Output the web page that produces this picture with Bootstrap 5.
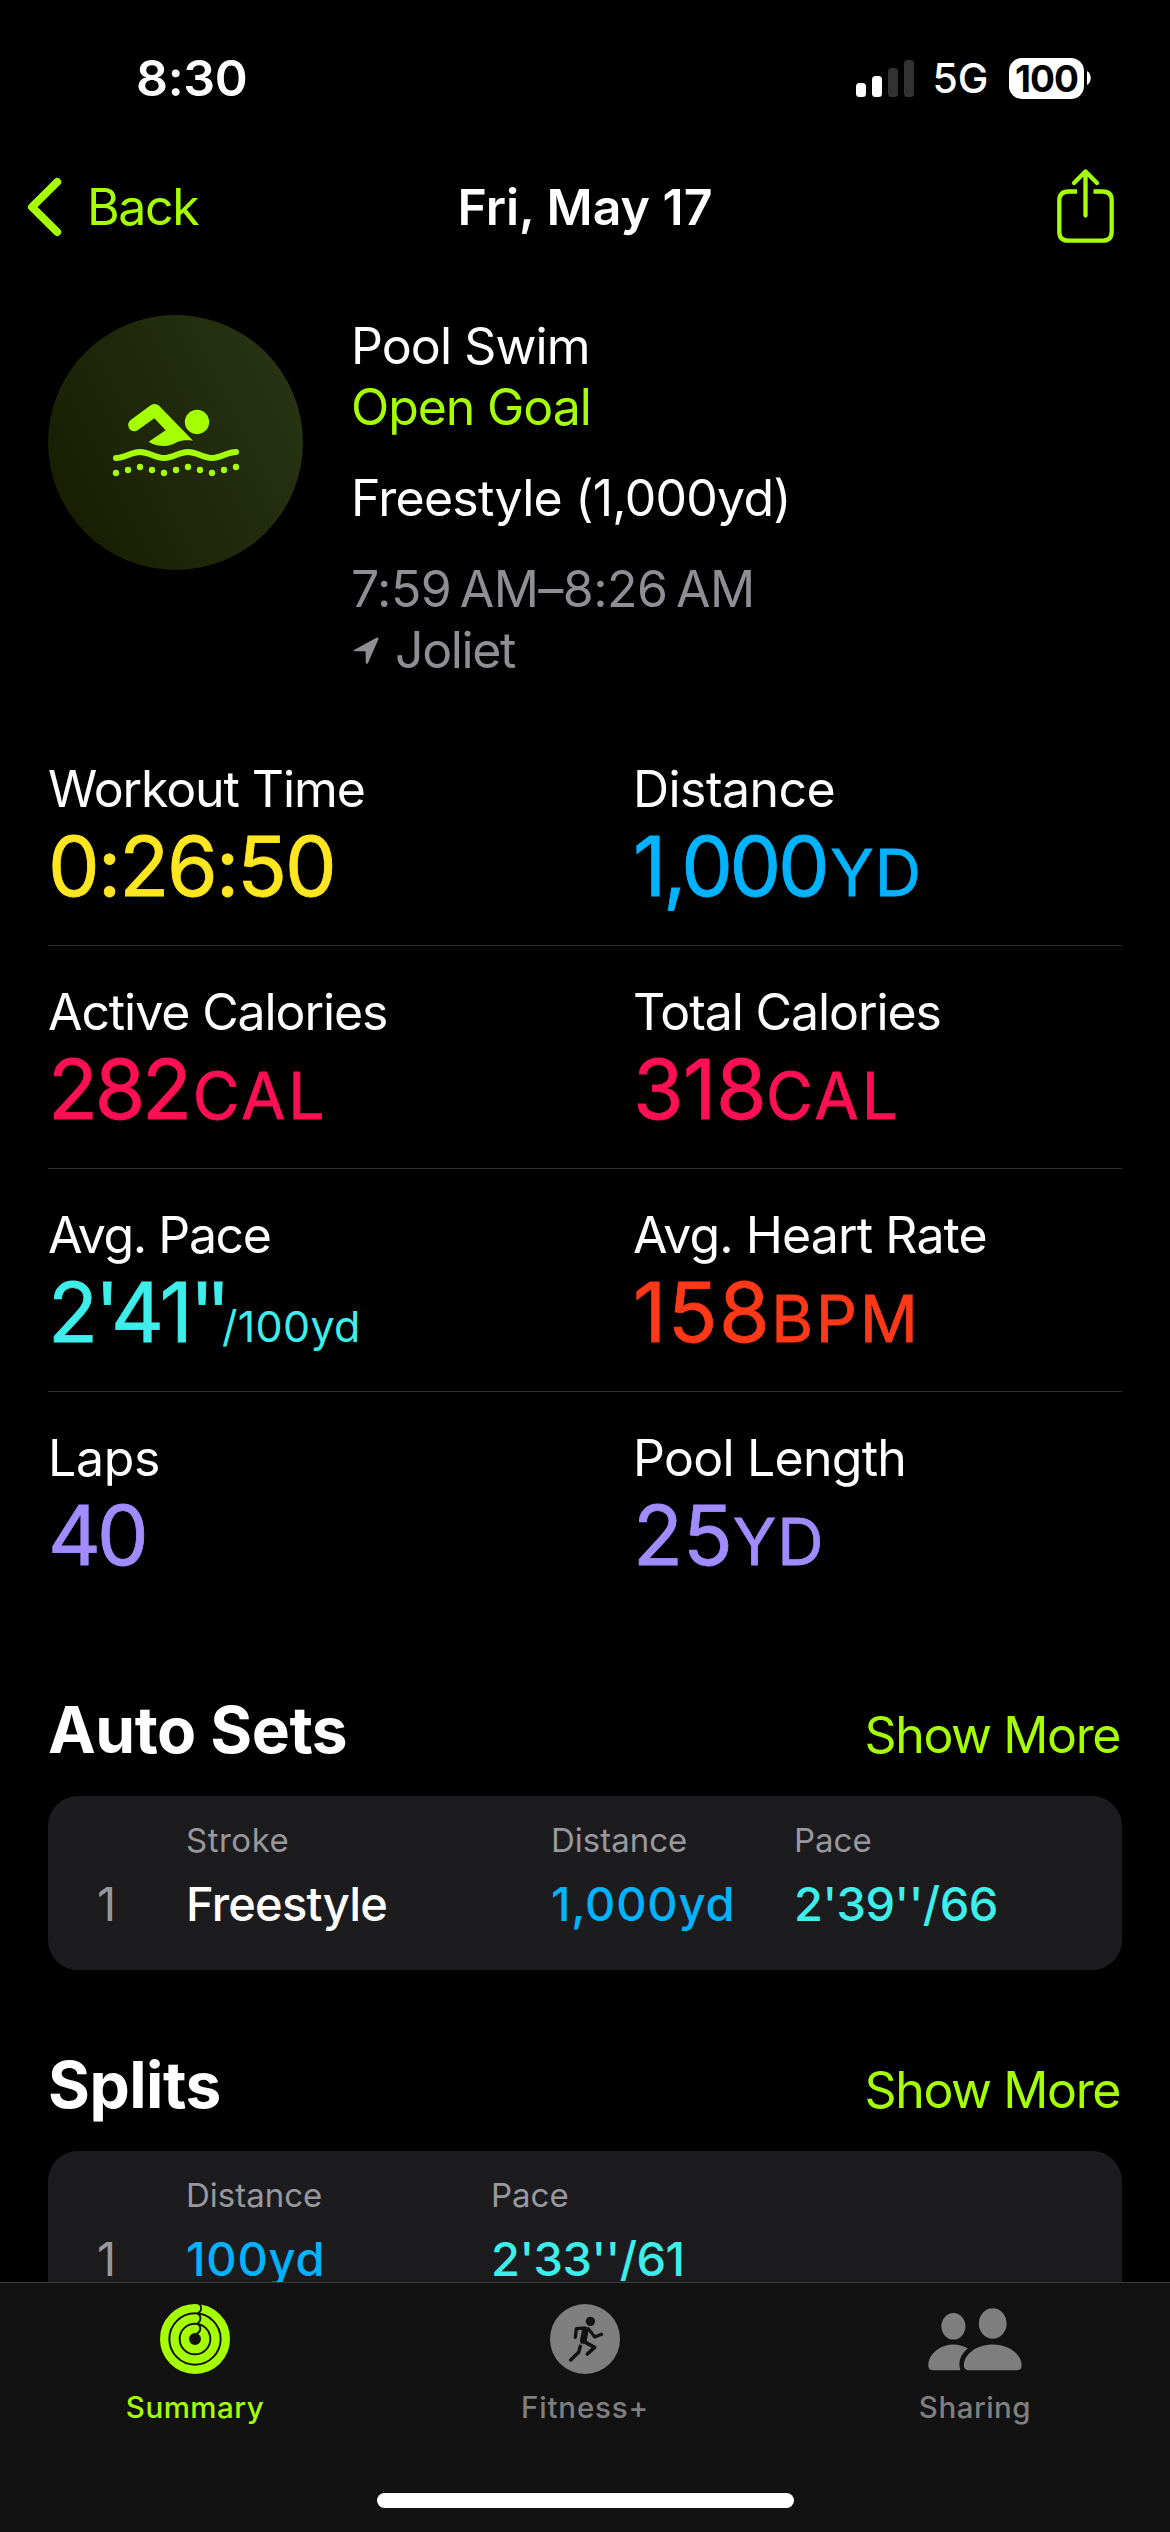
<!DOCTYPE html>
<html lang="en" data-bs-theme="dark">
<head>
<meta charset="utf-8">
<meta name="viewport" content="width=device-width, initial-scale=1">
<title>Workout Summary</title>
<link href="https://cdn.jsdelivr.net/npm/bootstrap@5.3.0/dist/css/bootstrap.min.css" rel="stylesheet">
<style>
  :root { --lime:#a6ff00; --blue:#00b3ff; --pink:#ff0f53; --aqua:#3deeea; --red:#ff3818; --violet:#a18cff; --yellow:#ffe620; --grey:#8e8e93; }
  body { background:#000; color:#fff; font-family:Inter,"Liberation Sans",sans-serif; font-size:50px; line-height:61px; white-space:nowrap; }
  .phone { width:1170px; height:2532px; overflow:hidden; }
  .phone svg { display:block; flex:none; }
  .fw-med { font-weight:500; }
  .lime { color:var(--lime); } .blue { color:var(--blue); } .pink { color:var(--pink); } .aqua { color:var(--aqua); }
  .red { color:var(--red); } .violet { color:var(--violet); } .yellow { color:var(--yellow); } .grey { color:var(--grey); }
  /* tracking */
  .tr-3 { letter-spacing:-.3px; } .tr-5 { letter-spacing:-.55px; } .tr-7 { letter-spacing:-.75px; } .tr-9 { letter-spacing:-.9px; }
  .tr-11 { letter-spacing:-1.1px; } .tr-14 { letter-spacing:-1.4px; } .tr-21 { letter-spacing:-2.1px; } .tr-34 { letter-spacing:-3.35px; }
  .tr-40 { letter-spacing:-4px; } .tr-85 { letter-spacing:-8.5px; } .tr-30 { letter-spacing:-3px; } .tr-p { letter-spacing:.5px; } .tr-p8 { letter-spacing:.8px; } .tr-p14 { letter-spacing:1.4px; }

  .statusbar { height:156px; padding:0 79px 0 136px; }
  .signal { margin-right:19px; }
  .cell-net { font-size:41px; margin-right:21px; }
  .battery { width:75px; height:41px; border-radius:13px; background:#fff; color:#000; font-size:37px; line-height:41px; letter-spacing:-.9px; }
  .battery-nub { margin-left:3px; }
  .topnav { height:102px; padding:0 27px; }
  .topnav .side { flex:1 1 0; }
  .topnav .share svg { margin:0 29px 5px 0; }
  .topnav .back-label { margin-left:24px; }
  .hero { height:465px; padding:57px 48px 0; }
  .hero-text { margin-left:48px; padding-top:1px; }
  .hero-gap { margin-top:30px; }
  .pin { margin-right:16px; margin-left:2px; }

  .metric-row { margin:0 48px; padding:36px 0 30px; border-bottom:1px solid #2e2e30; height:223px; }
  .metric-row:last-child { border-bottom:0; }
  .metric-cell { width:585px; }
  .metric-name { line-height:60px; }
  .metric-value { font-size:82px; line-height:96px; -webkit-text-stroke:.8px currentColor; }
  .unit { font-size:64px; letter-spacing:3px; margin-left:4px; }
  .unit-yd { letter-spacing:1px; }
  .unit-flush { margin-left:0; }
  .unit-sm { font-size:43px; letter-spacing:.3px; -webkit-text-stroke:0; }

  .sect { padding:83px 50px 34px 48px; }
  .sect h2 { font-size:64px; line-height:64px; letter-spacing:-.5px; }
  .sect a { text-decoration:none; line-height:50px; }
  .panel { margin:0 48px; height:174px; padding-top:24px; border-radius:30px; background:#1c1c1e; }
  .panel-head { font-size:33px; line-height:40px; color:#98989f; }
  .panel-line { font-size:47px; line-height:48px; margin-top:20px; }
  .c-idx { width:138px; padding-left:49px; color:#98989f; font-weight:400; }
  .c-stroke { width:365px; } .c-dist { width:243px; } .c-split { width:305px; }

  .scroll { height:2282px; overflow:hidden; }
  .tabs { height:250px; background:#121212; border-top:1px solid #3a3a3b; padding-bottom:24px; }
  .tab-item { padding-top:21px; color:#7f7f7f; font-size:29.5px; line-height:36px; text-decoration:none; }
  .tab-item.current { color:var(--lime); }
  .tab-glyph { height:70px; margin-bottom:15px; }
  .home-bar { width:417px; height:15px; border-radius:8px; background:#fff; }
</style>
</head>
<body>
<div class="phone d-flex flex-column">
  <div class="scroll">
    <header>
      <div class="statusbar d-flex align-items-center">
        <span class="fw-semibold tr-3">8:30</span>
        <svg class="signal ms-auto" width="58" height="37" viewBox="0 0 58 37"><g fill="#fff"><rect y="23" width="10" height="14" rx="3.5"/><rect x="16" y="16" width="10" height="21" rx="3.5"/></g><g fill="#333"><rect x="32" y="8" width="10" height="29" rx="3.5"/><rect x="48" width="10" height="37" rx="3.5"/></g></svg>
        <span class="cell-net fw-med tr-3">5G</span>
        <span class="battery fw-bold text-center">100</span>
        <svg class="battery-nub" width="4" height="14" viewBox="0 0 4 14"><path d="M0 0C5 3 5 11 0 14Z" fill="#fff"/></svg>
      </div>
      <nav class="topnav d-flex align-items-center">
        <a class="side d-flex align-items-center text-decoration-none lime" href="#">
          <svg width="36" height="60" viewBox="0 0 36 60"><path d="M30.2 5 5 30 30.2 55" fill="none" stroke="currentColor" stroke-width="8" stroke-linecap="round" stroke-linejoin="round"/></svg>
          <span class="back-label tr-14">Back</span>
        </a>
        <span class="fw-semibold">Fri, May 17</span>
        <a class="side share d-flex justify-content-end lime" href="#">
          <svg width="57" height="76" viewBox="0 0 57 76"><g fill="none" stroke="currentColor" stroke-width="4.3"><path d="M20 24.5H11.5Q2.3 24.5 2.3 33.5V64.5Q2.3 73.7 11.5 73.7H45.5Q54.7 73.7 54.7 64.5V33.5Q54.7 24.5 45.5 24.5H36.5"/><path d="M28.5 4.5V48.5M17 16 28.5 4.5 40 16" stroke-linecap="round" stroke-linejoin="round"/></g></svg>
        </a>
      </nav>
    </header>

    <section class="hero d-flex align-items-start">
      <svg width="255" height="255" viewBox="-126 -195 765 765">
        <defs><linearGradient id="disc" x1="0" y1=".75" x2="1" y2=".25"><stop offset="0" stop-color="#181d02"/><stop offset="1" stop-color="#283414"/></linearGradient></defs>
        <circle cx="256.5" cy="187.5" r="382.5" fill="url(#disc)"/>
        <g fill="#a6ff00">
          <path d="M122 120 182 76Q196 67 208 78L309 182C290 180 276 180 262 186C248 194 236 198 222 198C204 198 190 194 176 185L227 151 193 115 144 150A18 18 0 0 1 122 120Z"/>
          <circle cx="321" cy="126" r="36.5"/>
          <path d="M78 234C102 234 126 216 150 216S198 234 222 234S270 216 294 216S342 234 366 234S414 216 438 216" fill="none" stroke="#a6ff00" stroke-width="18" stroke-linecap="round"/>
          <circle cx="78" cy="279" r="9.5"/><circle cx="114" cy="270" r="9.5"/><circle cx="150" cy="261" r="9.5"/><circle cx="186" cy="270" r="9.5"/><circle cx="222" cy="279" r="9.5"/><circle cx="258" cy="270" r="9.5"/><circle cx="294" cy="261" r="9.5"/><circle cx="330" cy="270" r="9.5"/><circle cx="366" cy="279" r="9.5"/><circle cx="402" cy="270" r="9.5"/><circle cx="438" cy="261" r="9.5"/>
        </g>
      </svg>
      <div class="hero-text">
        <div class="tr-9">Pool Swim</div>
        <div class="lime tr-11">Open Goal</div>
        <div class="hero-gap tr-7">Freestyle (1,000yd)</div>
        <div class="hero-gap grey tr-5">7:59&#8201;AM–8:26&#8201;AM</div>
        <div class="grey d-flex align-items-center tr-14"><svg class="pin" width="26" height="27" viewBox="0 0 26 27"><path d="M1 13 23.5 .7Q26 0 25.3 2.5L15 26Q13.5 28 12.7 25.5V15.5Q12.7 14.2 11.5 14.2H2Q-.6 14.2 1 13Z" fill="currentColor"/></svg>Joliet</div>
      </div>
    </section>

    <section>
      <div class="metric-row d-flex">
        <div class="metric-cell"><div class="metric-name tr-11">Workout Time</div><div class="metric-value yellow tr-21">0:26:50</div></div>
        <div><div class="metric-name tr-5">Distance</div><div class="metric-value blue tr-34">1,000<span class="unit unit-yd">YD</span></div></div>
      </div>
      <div class="metric-row d-flex">
        <div class="metric-cell"><div class="metric-name tr-11">Active Calories</div><div class="metric-value pink tr-34">282<span class="unit">CAL</span></div></div>
        <div><div class="metric-name tr-11">Total Calories</div><div class="metric-value pink tr-5">318<span class="unit unit-flush">CAL</span></div></div>
      </div>
      <div class="metric-row d-flex">
        <div class="metric-cell"><div class="metric-name tr-14">Avg. Pace</div><div class="metric-value aqua tr-30">2<span class="tr-85">'</span>41<span class="tr-85">''</span><span class="unit unit-flush unit-sm">/100yd</span></div></div>
        <div><div class="metric-name tr-9">Avg. Heart Rate</div><div class="metric-value red tr-p14">158<span class="unit unit-flush">BPM</span></div></div>
      </div>
      <div class="metric-row d-flex">
        <div class="metric-cell"><div class="metric-name tr-3">Laps</div><div class="metric-value violet tr-40">40</div></div>
        <div><div class="metric-name tr-7">Pool Length</div><div class="metric-value violet">25<span class="unit unit-flush unit-yd">YD</span></div></div>
      </div>
    </section>

    <div class="sect d-flex justify-content-between align-items-baseline">
      <h2 class="fw-bold m-0">Auto Sets</h2><a class="lime tr-14" href="#">Show More</a>
    </div>
    <div class="panel">
      <div class="panel-head d-flex"><span class="c-idx"></span><span class="c-stroke tr-p">Stroke</span><span class="c-dist">Distance</span><span>Pace</span></div>
      <div class="panel-line d-flex fw-med"><span class="c-idx">1</span><span class="c-stroke tr-7">Freestyle</span><span class="c-dist blue tr-p8">1,000yd</span><span class="aqua tr-5">2'39''/66</span></div>
    </div>

    <div class="sect d-flex justify-content-between align-items-baseline">
      <h2 class="fw-bold m-0">Splits</h2><a class="lime tr-14" href="#">Show More</a>
    </div>
    <div class="panel">
      <div class="panel-head d-flex"><span class="c-idx"></span><span class="c-split">Distance</span><span>Pace</span></div>
      <div class="panel-line d-flex fw-med"><span class="c-idx">1</span><span class="c-split blue tr-p8">100yd</span><span class="aqua tr-5">2'33''/61</span></div>
    </div>
  </div>

  <footer class="tabs d-flex flex-column justify-content-between align-items-center">
    <div class="d-flex w-100">
      <a class="tab-item current col-4 d-flex flex-column align-items-center fw-med" href="#">
        <span class="tab-glyph d-flex align-items-center"><svg width="70" height="70" viewBox="180 42 210 210"><g fill="none" stroke="currentColor" stroke-width="25"><circle cx="285" cy="147" r="92.5"/><circle cx="285" cy="147" r="61.5"/><circle cx="285" cy="147" r="30.5"/></g><path d="M293 39A16 16 0 0 1 293 69M293 71A16 16 0 0 1 293 99M293 102A16 16 0 0 1 290 131" fill="none" stroke="#121212" stroke-width="5.5"/></svg></span>
        <span class="tr-p">Summary</span>
      </a>
      <a class="tab-item col-4 d-flex flex-column align-items-center fw-med" href="#">
        <span class="tab-glyph d-flex align-items-center"><svg width="70" height="70" viewBox="207 42 210 210"><circle cx="312" cy="147" r="105" fill="currentColor"/><circle cx="328" cy="94" r="14" fill="#121212"/><g fill="none" stroke="#121212" stroke-linecap="round" stroke-linejoin="round"><path d="M283 142 286 116 312 114" stroke-width="10"/><path d="M313 121 307 151" stroke-width="20"/><path d="M322 116 341 141 362 133" stroke-width="9.5"/><path d="M308 154 341 172 319 192" stroke-width="11"/><path d="M299 165 293 187 269 210" stroke-width="10.5"/></g><path d="M289 158 308 167" stroke="currentColor" stroke-width="3.5"/></svg></span>
        <span class="tr-p8">Fitness+</span>
      </a>
      <a class="tab-item col-4 d-flex flex-column align-items-center fw-med" href="#">
        <span class="tab-glyph d-flex align-items-center"><svg width="94" height="63" viewBox="143 53 281 188"><g fill="currentColor"><ellipse cx="219" cy="107.5" rx="36" ry="39.5"/><ellipse cx="336.5" cy="99" rx="41.5" ry="45.5"/><path d="M266 239Q251 239 250 225C250 190 290 162 336.5 162S423 190 423 225Q423 239 408 239Z"/><path d="M158 239Q144 239 144 225C144 190 180 162 219 162C236 162 252 167 262 174C245 188 236 205 237 225Q237 233 240 239Z"/></g></svg></span>
        <span class="tr-p">Sharing</span>
      </a>
    </div>
    <div class="home-bar"></div>
  </footer>
</div>
<script src="https://cdn.jsdelivr.net/npm/bootstrap@5.3.0/dist/js/bootstrap.bundle.min.js"></script>
</body>
</html>
